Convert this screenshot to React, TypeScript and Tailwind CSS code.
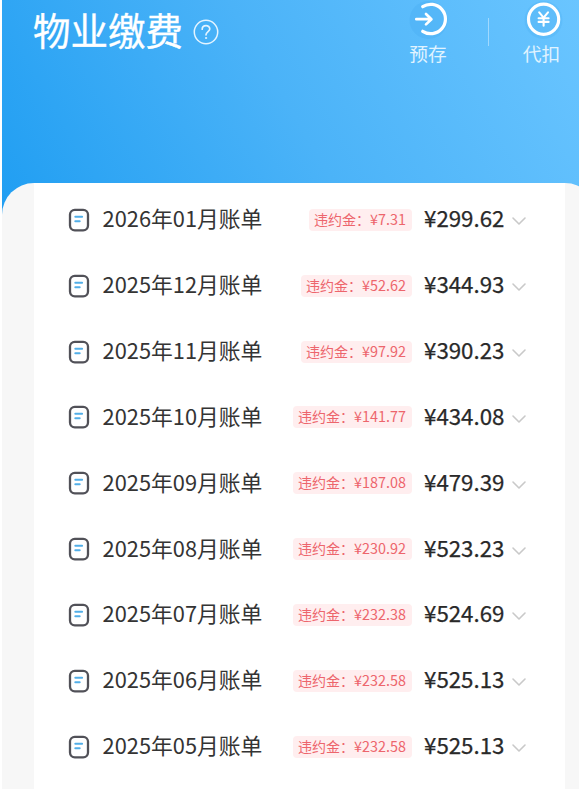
const bills = [
  ["2026年01月账单", "7.31", "299.62"],
  ["2025年12月账单", "52.62", "344.93"],
  ["2025年11月账单", "97.92", "390.23"],
  ["2025年10月账单", "141.77", "434.08"],
  ["2025年09月账单", "187.08", "479.39"],
  ["2025年08月账单", "230.92", "523.23"],
  ["2025年07月账单", "232.38", "524.69"],
  ["2025年06月账单", "232.58", "525.13"],
  ["2025年05月账单", "232.58", "525.13"],
];

function BillIcon() {
  return (
    <svg className="h-6 w-[22px] shrink-0" viewBox="0 0 22 24" fill="none">
      <rect x="2" y="1.8" width="18" height="20.6" rx="4.8" stroke="#515158" strokeWidth="2.3" />
      <path d="M7.3 8.8H14.1M7.3 13.3H11.7" stroke="#52aee8" strokeWidth="2" strokeLinecap="round" />
    </svg>
  );
}

function HelpIcon() {
  return (
    <svg className="ml-[10px] mt-px h-[26px] w-[26px]" viewBox="0 0 26 26" fill="none" stroke="#e4f4ff" strokeLinecap="round" strokeLinejoin="round">
      <circle cx="13" cy="13" r="11.7" strokeWidth="1.5" />
      <path d="M9.2 10.2C9.2 5.5 16.8 5.5 16.8 10C16.8 12.5 13 12.7 13 15.8" strokeWidth="1.7" />
      <circle cx="13" cy="19" r=".65" fill="#e4f4ff" strokeWidth=".7" />
    </svg>
  );
}

function DepositIcon() {
  return (
    <svg className="h-10 w-10" viewBox="0 0 40 40" fill="none" stroke="white" strokeLinecap="round" strokeLinejoin="round">
      <circle cx="20.5" cy="20" r="19" fill="#4caff3" fillOpacity=".45" stroke="none" />
      <path d="M14.7 6.7A14.7 14.7 0 1 1 14.7 31.3" strokeWidth="3.2" />
      <path d="M8.3 19.2H23M18 14L23.4 19.2L18 24.4" strokeWidth="2.7" />
    </svg>
  );
}

function WithholdIcon() {
  return (
    <svg className="h-10 w-10" viewBox="0 0 40 40" fill="none" stroke="white" strokeLinecap="round">
      <circle cx="20.5" cy="20" r="19" fill="#4caff3" fillOpacity=".3" stroke="none" />
      <circle cx="20.6" cy="19.2" r="15.1" strokeWidth="3.2" />
      <path d="M16.2 12.4L20.6 17.6L25 12.4M15.6 18.2H25.6M15.6 21.9H25.6M20.6 18.2V25.8" strokeWidth="2.1" />
    </svg>
  );
}

export default function App() {
  return (
    <main className="h-[789px] w-[579px] overflow-hidden bg-white font-['Noto_Sans_CJK_SC',sans-serif]">
      <header className="ml-[2px] flex h-[215px] items-start bg-[linear-gradient(60deg,#209ef2_0%,#4bb3f8_50%,#6ac5ff_100%)] text-white">
        <div className="flex h-[62px] items-center pl-[31px]">
          <h1 className="-mt-[4px] text-[37.5px] leading-[60px] font-normal [-webkit-text-stroke:0.35px_white]">物业缴费</h1>
          <HelpIcon />
        </div>
        <nav className="ml-auto flex items-start">
          <div className="flex w-10 flex-col items-center">
            <DepositIcon />
            <span className="-mt-px text-[18.7px] leading-[28px] whitespace-nowrap text-[#e0f3ff]">预存</span>
          </div>
          <div className="mr-[34px] ml-[40px] mt-[18px] h-7 w-px bg-[#a0d9ff]" />
          <div className="mr-[16px] flex w-10 flex-col items-center">
            <WithholdIcon />
            <span className="-mt-px mr-[3px] text-[18.7px] leading-[28px] whitespace-nowrap text-[#e0f3ff]">代扣</span>
          </div>
        </nav>
      </header>
      <section className="-mt-8 ml-[2px] h-[606px] w-[595px] rounded-t-[32px] bg-[#f7f7f7] pl-8">
        <div className="h-full w-[531px] bg-white pt-[4px]">
          {bills.map(([name, penalty, amount]) => (
            <div key={name} className="flex h-[65.85px] items-center pr-[38px] pl-[34px]">
              <BillIcon />
              <span className="-mt-[3px] ml-[12.6px] text-[21.8px] leading-8 whitespace-nowrap text-[#343434]">{name}</span>
              <span className="ml-auto flex h-[22px] items-center rounded-[4px] bg-[#ffeeef] pr-[6px] pl-[5px] leading-[20px] whitespace-nowrap text-[#ed656c]">
                <span className="-mt-[2px] text-[14px]">违约金：</span>
                <span className="-mt-[2px] text-[14.4px]">¥{penalty}</span>
              </span>
              <span className="-mt-[5px] ml-[12px] w-[81px] text-[22.3px] leading-8 whitespace-nowrap text-[#292929] [-webkit-text-stroke:0.25px_#292929]">¥{amount}</span>
              <svg className="mt-[3px] ml-[6px] h-[10px] w-4" viewBox="0 0 16 10" fill="none">
                <path d="M2 2L8 8L14 2" stroke="#c9c9c9" strokeWidth="1.6" strokeLinecap="round" strokeLinejoin="round" />
              </svg>
            </div>
          ))}
        </div>
      </section>
    </main>
  );
}
